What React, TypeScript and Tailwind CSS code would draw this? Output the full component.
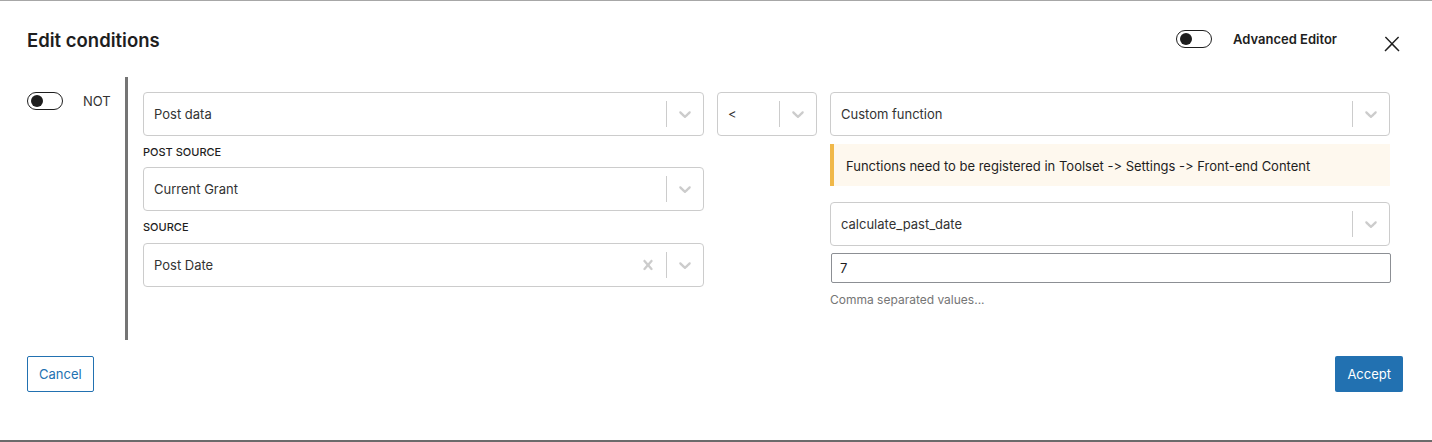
import React from "react";

const Chevron = () => (
  <svg width="20" height="20" viewBox="0 0 20 20" fill="#cccccc" aria-hidden="true">
    <path d="M4.516 7.548c0.436-0.446 1.043-0.481 1.576 0l3.908 3.747 3.908-3.747c0.533-0.481 1.141-0.446 1.574 0 0.436 0.445 0.408 1.197 0 1.615-0.406 0.418-4.695 4.502-4.695 4.502-0.217 0.223-0.502 0.335-0.787 0.335s-0.57-0.112-0.789-0.335c0 0-4.287-4.084-4.695-4.502s-0.436-1.17 0-1.615z" />
  </svg>
);

const Cross = () => (
  <svg width="20" height="20" viewBox="0 0 20 20" fill="#cccccc" aria-hidden="true">
    <path d="M14.348 14.849c-0.469 0.469-1.229 0.469-1.697 0l-2.651-3.030-2.651 3.029c-0.469 0.469-1.229 0.469-1.697 0-0.469-0.469-0.469-1.229 0-1.697l2.758-3.15-2.759-3.152c-0.469-0.469-0.469-1.228 0-1.697s1.228-0.469 1.697 0l2.652 3.031 2.651-3.031c0.469-0.469 1.228-0.469 1.697 0s0.469 1.229 0 1.697l-2.758 3.152 2.758 3.15c0.469 0.469 0.469 1.229 0 1.698z" />
  </svg>
);

function Select({ value, clearable = false }: { value: string; clearable?: boolean }) {
  return (
    <div className="flex h-[44px] w-full items-center rounded-[4px] border border-[#cccccc] bg-white">
      <div className="flex-1 truncate pl-[10px] pt-[2px] text-[13px] text-[#333333]">{value}</div>
      {clearable && (
        <div className="flex w-[36px] items-center justify-center">
          <Cross />
        </div>
      )}
      <div className="h-[26px] w-px bg-[#cccccc]" />
      <div className="flex w-[36px] items-center justify-center">
        <Chevron />
      </div>
    </div>
  );
}

function Toggle() {
  return (
    <div className="relative h-[18px] w-[36px] rounded-full border border-[#1e1e1e] bg-white">
      <div className="absolute left-[3px] top-[2px] h-[12px] w-[12px] rounded-full bg-[#1e1e1e]" />
    </div>
  );
}

export default function App() {
  return (
    <div
      className="flex h-[442px] w-[1432px] flex-col border-t border-b-2 border-t-[#a7a7a7] border-b-[#6b6b6b] bg-white text-[#1e1e1e] [font-feature-settings:'calt'_0]"
      style={{ fontFamily: "Inter, 'Noto Sans', sans-serif" }}
    >
      {/* Header */}
      <div className="flex h-[76px] items-start justify-between pl-[27px] pr-[28px] pt-[27px]">
        <h1 className="text-[18.5px] font-semibold leading-[24px] text-[#1e1e1e]">Edit conditions</h1>
        <div className="flex items-start">
          <div className="mt-[2px]">
            <Toggle />
          </div>
          <div className="ml-[21px] text-[13px] font-semibold leading-[22px]">Advanced Editor</div>
          <button className="ml-[43px] mt-[4px] h-[24px] w-[24px]" aria-label="Close">
            <svg width="24" height="24" viewBox="0 0 24 24" fill="#1e1e1e">
              <path d="M13 11.8l6.1-6.3-1-1-6.1 6.2-6.1-6.2-1 1 6.1 6.3-6.5 6.7 1 1 6.5-6.6 6.5 6.6 1-1z" />
            </svg>
          </button>
        </div>
      </div>

      {/* Body */}
      <div className="flex pl-[27px]">
        <div className="flex w-[98px] items-start pt-[15px]">
          <Toggle />
          <span className="ml-[20px] text-[13px] leading-[18px] text-[#333333]">NOT</span>
        </div>
        <div className="h-[263px] w-[3px] bg-[#757575]" />
        <div className="flex gap-[13px] pl-[15px] pt-[15px]">
          <div className="flex w-[561px] flex-col">
            <Select value="Post data" />
            <div className="mb-[7px] mt-[8px] text-[11px] font-medium uppercase leading-[16px]">Post source</div>
            <Select value="Current Grant" />
            <div className="mb-[8px] mt-[8px] text-[11px] font-medium uppercase leading-[16px]">Source</div>
            <Select value="Post Date" clearable />
          </div>
          <div className="w-[100px]">
            <Select value="<" />
          </div>
          <div className="flex w-[560px] flex-col">
            <Select value="Custom function" />
            <div className="mt-[8px] flex h-[42px] items-center border-l-4 border-[#f0b849] bg-[#fef8ee] pl-[12px] pt-[3px] text-[13px]">
              Functions need to be registered in Toolset -&gt; Settings -&gt; Front-end Content
            </div>
            <div className="mt-[16px]">
              <Select value="calculate_past_date" />
            </div>
            <div className="ml-px mt-[7px] flex h-[30px] w-[560px] items-center rounded-[2px] border border-[#8c8f94] pl-[8px] pt-[2px] text-[13px]">
              7
            </div>
            <div className="mt-[9px] text-[12px] leading-[16px] text-[#757575]">Comma separated values...</div>
          </div>
        </div>
      </div>

      {/* Footer */}
      <div className="flex justify-between pl-[27px] pr-[29px] pt-[16px]">
        <button className="h-[36px] rounded-[2px] border border-[#2271b1] px-[11px] pt-[2px] text-[13px] text-[#2271b1]">
          Cancel
        </button>
        <button className="h-[36px] rounded-[2px] bg-[#2271b1] px-[12px] pt-[2px] text-[13px] text-white">Accept</button>
      </div>
    </div>
  );
}
